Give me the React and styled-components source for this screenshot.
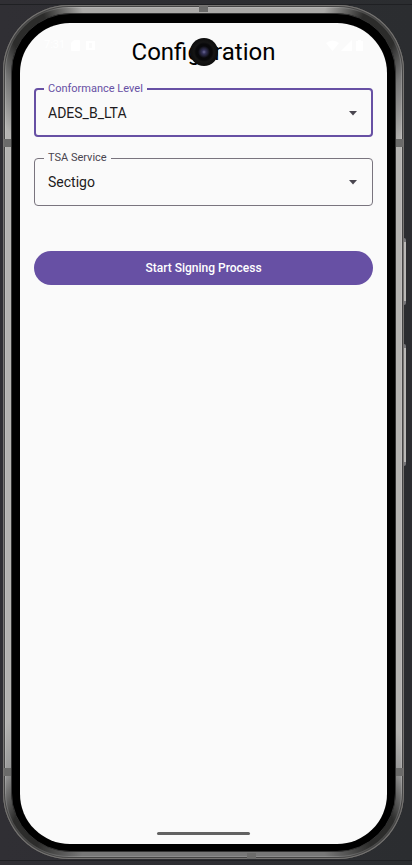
import React, { useState } from "react";
import styled, { createGlobalStyle } from "styled-components";

const GlobalStyle = createGlobalStyle`
  *, *::before, *::after { box-sizing: border-box; }
  body {
    margin: 0;
    background: #2b2d30;
    font-family: Roboto, "Liberation Sans", sans-serif;
  }
`;

const Desk = styled.div`
  min-height: 100vh;
  display: flex;
  padding: 5px 8px 6px 3px;
  background:
    linear-gradient(#1f2023, #1f2023) 0 4px / 100% 1px no-repeat,
    linear-gradient(#1f2023, #1f2023) 0 calc(100% - 4px) / 100% 1px no-repeat,
    linear-gradient(90deg, #302f34, #2b2d30);
`;

const Shell = styled.div`
  position: relative;
  flex: 1;
  display: flex;
  padding: 8px 8px 7px;
  border-radius: 66px;
  background: conic-gradient(
    #aaa9a7 0deg, #aaa9a7 16deg, #2c2c2b 21deg, #2c2c2b 26deg, #777 29deg,
    #b4b3b1 34deg, #b4b3b1 147deg, #999 150deg, #2c2c2b 154deg, #2c2c2b 158deg,
    #777 164deg, #777 196deg, #2c2c2b 202deg, #2c2c2b 206deg, #999 210deg,
    #b4b3b1 214deg, #b4b3b1 327deg, #777 331deg, #2c2c2b 334deg,
    #2c2c2b 339deg, #aaa9a7 344deg, #aaa9a7 360deg
  );
  box-shadow:
    inset 0 0 0 1px #777573,
    inset 0 0 0 2px #454545,
    inset 0 0 0 3px rgba(255, 255, 255, 0.15);
`;

const Antenna = styled.span`
  position: absolute;
  background: #6b6b6a;
  width: ${(p) => (p.$flat ? "9px" : "7px")};
  height: ${(p) => (p.$flat ? "6px" : "8px")};
  top: ${(p) => p.$top || "auto"};
  bottom: ${(p) => p.$bottom || "auto"};
  left: ${(p) => p.$left || "auto"};
  right: ${(p) => p.$right || "auto"};
`;

const SideKey = styled.span`
  position: absolute;
  right: -2px;
  top: ${(p) => p.$top}px;
  height: ${(p) => p.$length}px;
  width: 2px;
  background: #b9b8b6;
  border-block: 4px solid #77777a;
  border-radius: 0 2px 2px 0;
`;

const Bezel = styled.div`
  flex: 1;
  display: flex;
  padding: 9px 8px 7px;
  border: 1px solid #343434;
  border-radius: 59px;
  background: #000;
`;

const Screen = styled.main`
  flex: 1;
  min-width: 0;
  display: flex;
  flex-direction: column;
  padding: 12px 14px 9px;
  border-radius: 50px;
  background: #fafafa;
`;

const Header = styled.header`
  position: relative;
  display: grid;
  grid-template-columns: 1fr auto 1fr;
  align-items: center;
  height: 34px;
`;

const Status = styled.div`
  display: flex;
  align-items: center;
  justify-content: ${(p) => (p.$end ? "flex-end" : "flex-start")};
  gap: ${(p) => (p.$end ? "2px" : "6px")};
  padding: 0 8px 14px 10px;
  color: #fff;
  font-size: 11px;
  line-height: 12px;
`;

const Title = styled.h1`
  margin: 0;
  font-size: 24px;
  line-height: 32px;
  font-weight: 400;
  color: #000;
`;

const Camera = styled.span`
  position: absolute;
  left: 50%;
  top: 50%;
  width: 28px;
  height: 28px;
  transform: translate(-50%, -50%);
  border-radius: 50%;
  background: radial-gradient(
    circle, #6d6a96 0, #34325a 2px, #201f33 4px, #08080a 6px, #08080a 8px,
    #151515 10px, #0c0c0c 14px
  );
`;

const Form = styled.form`
  display: flex;
  flex-direction: column;
  margin-top: 13px;
`;

const Outline = styled.fieldset`
  min-width: 0;
  height: 55px;
  margin: 0 0 14px;
  padding: 0;
  border: ${(p) => (p.$active ? "2px solid #6750a4" : "1px solid #79747e")};
  border-radius: 4px;
`;

const Legend = styled.legend`
  margin-left: ${(p) => (p.$active ? "8px" : "9px")};
  padding: 0 4px;
  font-size: 11px;
  line-height: 14px;
  color: ${(p) => (p.$active ? "#6750a4" : "#49454f")};
`;

const Control = styled.div`
  display: grid;
  align-items: center;
  height: 34px;
`;

const Select = styled.select`
  grid-area: 1 / 1;
  width: 100%;
  height: 32px;
  padding: 0 40px 0 ${(p) => (p.$active ? "12px" : "13px")};
  appearance: none;
  border: 0;
  outline: 0;
  background: transparent;
  font: 400 14px/20px Roboto, "Liberation Sans", sans-serif;
  color: #1d1b20;
`;

const Arrow = styled.svg`
  grid-area: 1 / 1;
  justify-self: end;
  margin-right: ${(p) => (p.$active ? "13px" : "14px")};
  pointer-events: none;
`;

const StartButton = styled.button`
  height: 34px;
  margin-top: 31px;
  padding: 0 20px;
  border: 0;
  border-radius: 17px;
  background: #6750a4;
  color: #fff;
  font: 500 12px/16px Roboto, "Liberation Sans", sans-serif;
`;

const HomeBar = styled.div`
  width: 93px;
  height: 3px;
  margin: auto auto 0;
  border-radius: 2px;
  background: #626262;
`;

function Dropdown({ id, label, options, active, onFocus }) {
  const [value, setValue] = useState(options[0]);
  return (
    <Outline $active={active}>
      <Legend $active={active}>
        <label htmlFor={id}>{label}</label>
      </Legend>
      <Control>
        <Select
          id={id}
          $active={active}
          value={value}
          onFocus={onFocus}
          onChange={(e) => setValue(e.target.value)}
        >
          {options.map((o) => (
            <option key={o}>{o}</option>
          ))}
        </Select>
        <Arrow $active={active} width="10" height="5" viewBox="0 0 10 5" aria-hidden="true">
          <path d="M1 0h8L5 4.5z" fill="#49454f" />
        </Arrow>
      </Control>
    </Outline>
  );
}

export default function App() {
  const [focused, setFocused] = useState("level");
  return (
    <>
      <GlobalStyle />
      <Desk>
        <Shell>
          <Antenna $flat $top="1px" $left="49%" />
          <Antenna $flat $bottom="0" $right="37%" />
          <Antenna $top="134px" $left="1px" />
          <Antenna $top="134px" $right="1px" />
          <Antenna $bottom="83px" $left="1px" />
          <Antenna $bottom="83px" $right="1px" />
          <SideKey $top={233} $length={67} />
          <SideKey $top={339} $length={122} />
          <Bezel>
            <Screen>
              <Header>
                <Status>
                  <span>7:31</span>
                  <svg width="9" height="11" viewBox="0 0 9 11" aria-hidden="true">
                    <path d="M3 0h5q1 0 1 1v9q0 1-1 1H1q-1 0-1-1V3z" fill="#fff" />
                  </svg>
                  <svg width="9" height="11" viewBox="0 0 9 11" aria-hidden="true">
                    <path d="M0 1h9v9H0zM3 3v5h3V3z" fillRule="evenodd" fill="#fff" />
                  </svg>
                </Status>
                <Title>Configuration</Title>
                <Status $end>
                  <svg width="13" height="11" viewBox="0 0 13 11" aria-hidden="true">
                    <path d="M0 3q6.500-5 13 0L6.500 11z" fill="#fff" />
                  </svg>
                  <svg width="11" height="11" viewBox="0 0 11 11" aria-hidden="true">
                    <path d="M11 0v11H0z" fill="#fff" />
                  </svg>
                  <svg width="11" height="11" viewBox="0 0 11 11" aria-hidden="true">
                    <path d="M4 0h3v1h2v10H2V1h2z" fill="#fff" />
                  </svg>
                </Status>
                <Camera />
              </Header>
              <Form onSubmit={(e) => e.preventDefault()}>
                <Dropdown
                  id="level"
                  label="Conformance Level"
                  options={["ADES_B_LTA", "ADES_B_LT", "ADES_B_T", "ADES_B_B"]}
                  active={focused === "level"}
                  onFocus={() => setFocused("level")}
                />
                <Dropdown
                  id="tsa"
                  label="TSA Service"
                  options={["Sectigo"]}
                  active={focused === "tsa"}
                  onFocus={() => setFocused("tsa")}
                />
                <StartButton type="submit">Start Signing Process</StartButton>
              </Form>
              <HomeBar />
            </Screen>
          </Bezel>
        </Shell>
      </Desk>
    </>
  );
}
